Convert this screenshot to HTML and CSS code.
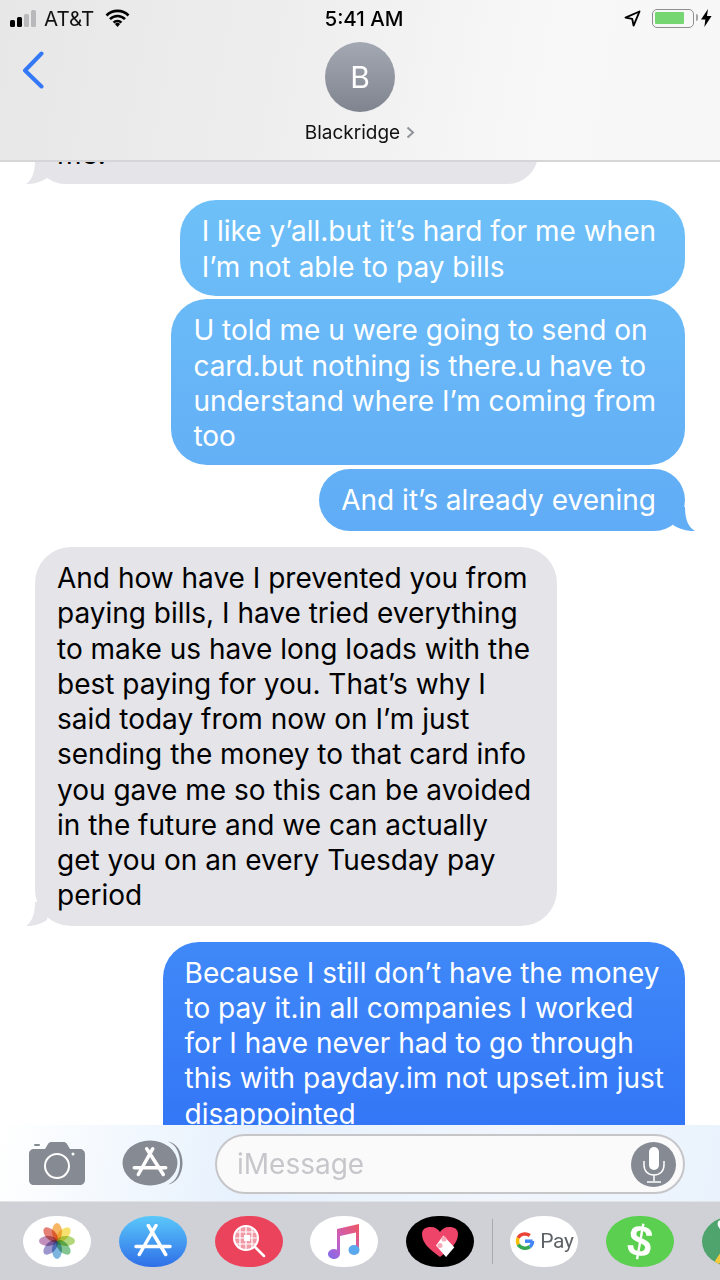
FILE: index.html
```html
<!DOCTYPE html>
<html lang="en">
<head>
    <meta charset="UTF-8">
    <title>Blackridge</title>
    <link rel="stylesheet" href="styles.css">
</head>
<body>
    <div class="phone">
        <header class="top">
            <div class="status">
                <div class="status-left">
                    <span class="bars"><i class="on"></i><i class="on"></i><i></i><i></i></span>
                    <span class="carrier">AT&amp;T</span>
                    <svg class="wifi" width="25" height="18" viewBox="0 0 25 18"><path d="M1.5 6.5a15.5 15.5 0 0 1 22 0M5 10.2a10.5 10.5 0 0 1 15 0M8.6 13.6a5.4 5.4 0 0 1 7.8 0" fill="none" stroke="#000" stroke-width="2.6"/><path d="M12.5 18l-2.6-3a3.6 3.6 0 0 1 5.2 0z" fill="#000"/></svg>
                </div>
                <div class="time">5:41 AM</div>
                <div class="status-right">
                    <svg class="arrow" width="17" height="17" viewBox="0 0 17 17"><path d="M15.5 1.5L1.5 7.6l6.7 1.3 1.4 6.7z" fill="none" stroke="#000" stroke-width="1.9" stroke-linejoin="round"/></svg>
                    <span class="battery"><span class="charge"></span></span>
                    <svg class="bolt" width="11" height="18" viewBox="0 0 11 18"><path d="M7 0L0 10.4h4.3L3.4 18l7.2-11H6z" fill="#000"/></svg>
                </div>
            </div>
            <div class="nav">
                <svg class="back" width="22" height="38" viewBox="0 0 22 38"><path d="M19.5 2.5L3 19.5l16.5 16" fill="none" stroke="#3478f6" stroke-width="4" stroke-linecap="round" stroke-linejoin="round"/></svg>
                <div class="contact">
                    <div class="avatar">B</div>
                    <div class="name">Blackridge<svg width="9" height="13" viewBox="0 0 9 13"><path d="M1.5 1.5L7 6.5l-5.500 5" fill="none" stroke="#8e929b" stroke-width="2"/></svg></div>
                </div>
            </div>
        </header>

        <main class="thread">
            <div class="bubble them first">me.<svg class="tail tail-left" width="24" height="24" viewBox="0 0 24 24"><path d="M9 0C9 12 6 20 0 24C8 24.500 15 22 21 18L24 0Z"/></svg></div>

            <div class="bubble me gap-big">I like y’all.but it’s hard for me when<br>I’m not able to pay bills</div>
            <div class="bubble me gap-small">U told me u were going to send on<br>card.but nothing is there.u have to<br>understand where I’m coming from<br>too</div>
            <div class="bubble me gap-small has-tail">And it’s already evening<svg class="tail tail-right" width="24" height="24" viewBox="0 0 24 24"><path d="M14 0C14 12 17 20 24 24C16 24.500 8 22 2 18L0 0Z"/></svg></div>

            <div class="bubble them gap-big">And how have I prevented you from<br>paying bills, I have tried everything<br>to make us have long loads with the<br>best paying for you. That’s why I<br>said today from now on I’m just<br>sending the money to that card info<br>you gave me so this can be avoided<br>in the future and we can actually<br>get you on an every Tuesday pay<br>period<svg class="tail tail-left" width="24" height="24" viewBox="0 0 24 24"><path d="M9 0C9 12 6 20 0 24C8 24.500 15 22 21 18L24 0Z"/></svg></div>

            <div class="bubble me gap-big last">Because I still don’t have the money<br>to pay it.in all companies I worked<br>for I have never had to go through<br>this with payday.im not upset.im just<br>disappointed</div>
        </main>

        <div class="composer">
            <svg class="camera" width="57" height="44" viewBox="0 0 57 44"><path d="M5 8h11l3-5c.6-1 1.500-2 3-2h13c1.500 0 2.400 1 3 2l3 5h10c2.500 0 5 2 5 5v26c0 3-2.500 5-5 5H5c-3 0-5-2-5-5V13c0-3 2-5 5-5z" fill="#868a93"/><rect x="5" y="3" width="6" height="2" rx="1" fill="#868a93"/><circle cx="28" cy="25" r="12" fill="none" stroke="#fff" stroke-width="2"/><circle cx="44" cy="13" r="1.500" fill="#fff"/></svg>
            <div class="apps-btn">
                <svg width="62" height="46" viewBox="0 0 62 46"><path d="M46 1.500c8 3 12 12 12 21.500s-4 18.500-12 21.500c8-1 14.500-10 14.500-21.500S54 2.500 46 1.500z" fill="#868a93"/><ellipse cx="28" cy="23" rx="27.500" ry="22.500" fill="#868a93"/><g class="store-a" stroke="#fff"><path d="M30.700 8.800L16.300 34.500M24.700 8.800L41.300 34.500M12.300 27.800H43.700"/></g></svg>
            </div>
            <div class="field">
                <span class="placeholder">iMessage</span>
                <span class="mic"><svg width="24" height="37" viewBox="0 0 24 37"><rect x="7" y="1" width="10" height="23" rx="5" fill="#fff"/><path d="M2 15v4c0 6 4 10 10 10s10-4 10-10v-4M12 29v6M5 36h14" fill="none" stroke="#fff" stroke-width="1.500"/></svg></span>
            </div>
        </div>

        <nav class="drawer">
            <div class="pill pill-white">
                <svg width="36" height="36" viewBox="0 0 36 36"><g class="petals"><ellipse cx="18" cy="9" rx="5" ry="9" fill="#f5a948"/><ellipse cx="18" cy="9" rx="5" ry="9" fill="#f5dc55" transform="rotate(45 18 18)"/><ellipse cx="18" cy="9" rx="5" ry="9" fill="#a5cf62" transform="rotate(90 18 18)"/><ellipse cx="18" cy="9" rx="5" ry="9" fill="#6dbb7e" transform="rotate(135 18 18)"/><ellipse cx="18" cy="9" rx="5" ry="9" fill="#66a8da" transform="rotate(180 18 18)"/><ellipse cx="18" cy="9" rx="5" ry="9" fill="#8b86c4" transform="rotate(225 18 18)"/><ellipse cx="18" cy="9" rx="5" ry="9" fill="#b67bb0" transform="rotate(270 18 18)"/><ellipse cx="18" cy="9" rx="5" ry="9" fill="#df6a5d" transform="rotate(315 18 18)"/></g></svg>
            </div>
            <div class="pill pill-store">
                <svg width="38" height="34" viewBox="0 0 38 34"><g class="store-a" stroke="#fff"><path d="M22 1.500L5.300 30.500M14.300 1.500L31.700 30.500M2 22.500H36"/></g></svg>
            </div>
            <div class="pill pill-red">
                <svg width="34" height="34" viewBox="0 0 34 34"><circle cx="14" cy="14" r="12" fill="#f19aa6" stroke="#fff" stroke-width="2"/><path d="M8 3v22M14 2v24M20 3v22M3 8h22M2 14h24M3 20h22" stroke="#fff" stroke-width="1.200"/><rect x="12" y="11" width="6" height="6" fill="#fff"/><path d="M23 23l9 9" stroke="#fff" stroke-width="2.500" stroke-linecap="round"/></svg>
            </div>
            <div class="pill pill-white">
                <svg width="34" height="36" viewBox="0 0 34 36"><defs><linearGradient id="note" x1="1" y1="0" x2="0" y2="1"><stop offset="0" stop-color="#f0565f"/><stop offset="0.55" stop-color="#c95fc0"/><stop offset="1" stop-color="#7d6bf0"/></linearGradient></defs><path d="M10 6L32 1v26a5 4.500 0 1 1-3-4.100V9.500L13 13v18a6 5 0 1 1-3-4.300z" fill="url(#note)"/><ellipse cx="27" cy="27" rx="5.500" ry="5" fill="#5aa9ee"/></svg>
            </div>
            <div class="pill pill-black">
                <svg width="38" height="34" viewBox="0 0 38 34"><path d="M19 33C8 25 1 19 1 10 1 4 6 3 10 3c4 0 7 2 9 5 2-3 5-5 9-5 4 0 9 1 9 7 0 9-7 15-18 23z" fill="#ee4469"/><path d="M15 21.500L22.300 11.500 33.300 23.200 25 33z" fill="#fff"/><circle cx="19" cy="21.500" r="2.500" fill="#f4a8b8"/><circle cx="23" cy="15" r="2.500" fill="#f4a8b8"/></svg>
            </div>
            <span class="divider"></span>
            <div class="pill pill-white gpay">
                <svg width="20" height="20" viewBox="0 0 20 20"><path d="M17.500 10.200H10" fill="none" stroke="#4285f4" stroke-width="3.500"/><path d="M17.500 10c0 2.500-1 4.500-2.700 5.800" fill="none" stroke="#4285f4" stroke-width="3.500"/><path d="M14.800 15.800C11 18.500 5 17 3.200 13.300" fill="none" stroke="#34a853" stroke-width="3.500"/><path d="M3.200 13.300c-.8-2-.8-4.600 0-6.600" fill="none" stroke="#fbbc05" stroke-width="3.500"/><path d="M3.200 6.700C5 3 10.700 1.500 14.800 4.500" fill="none" stroke="#ea4335" stroke-width="3.500"/></svg>
                <span class="pay">Pay</span>
            </div>
            <div class="pill pill-green"><span class="dollar">$</span></div>
            <div class="pill pill-maps">
                <svg width="68" height="51" viewBox="0 0 68 51"><path d="M12 51l8-12" stroke="#f3c93f" stroke-width="5"/><path d="M19 4c-3 0-4 3-3 6l3 5 3-5c1-3 0-6-3-6z" fill="#fff"/></svg>
            </div>
        </nav>
    </div>
</body>
</html>
```

FILE: styles.css
```css
html, body {
    margin: 0;
    padding: 0;
    background: #fff;
}

.phone {
    width: 720px;
    height: 1280px;
    display: flex;
    flex-direction: column;
    overflow: hidden;
    font-family: Inter, "Liberation Sans", sans-serif;
    color: #000;
}

/* top bar */

.top {
    height: 160px;
    flex: none;
    background: linear-gradient(100deg, #e7e7e8 0%, #eeeeee 40%, #f8f8f8 75%, #f7f7f7 100%);
    border-bottom: 2px solid #d6d6d8;
}

.status {
    height: 36px;
    display: grid;
    grid-template-columns: 1fr auto 1fr;
    align-items: center;
    padding: 0 8px 0 10px;
}

.status-left {
    display: flex;
    align-items: center;
}

.bars {
    display: flex;
    align-items: flex-end;
    gap: 2px;
    width: 28px;
    height: 17px;
}

.bars i {
    display: block;
    width: 5px;
    border-radius: 1.5px;
    background: #b9b9bb;
}

.bars i:nth-child(1) { height: 7px; }
.bars i:nth-child(2) { height: 10px; }
.bars i:nth-child(3) { height: 13px; }
.bars i:nth-child(4) { height: 17px; }
.bars i.on { background: #000; }

.carrier {
    margin-left: 6px;
    font-size: 20.5px;
    color: #111;
}

.wifi {
    margin-left: 11px;
}

.time {
    margin-left: 6px;
    font-size: 20.5px;
    font-weight: 500;
}

.status-right {
    display: flex;
    align-items: center;
    justify-content: flex-end;
}

.battery {
    position: relative;
    box-sizing: border-box;
    width: 42px;
    height: 19px;
    margin-left: 11px;
    padding: 2px;
    border: 1.5px solid #8f8f91;
    border-radius: 5px;
}

.battery:after {
    content: "";
    position: absolute;
    right: -5px;
    top: 4px;
    width: 2px;
    height: 7px;
    background: #a5a5a7;
    border-radius: 0 2px 2px 0;
}

.charge {
    display: block;
    width: 29px;
    height: 12px;
    background: #76d672;
    border-radius: 1px;
}

.bolt {
    margin-left: 7px;
}

.nav {
    display: grid;
    grid-template-columns: 1fr auto 1fr;
    padding: 6px 22px 0;
}

.back {
    margin-top: 9px;
}

.contact {
    display: flex;
    flex-direction: column;
    align-items: center;
}

.avatar {
    width: 70px;
    height: 70px;
    border-radius: 50%;
    background: linear-gradient(#a4a8b3, #80848f);
    color: #fff;
    font-size: 30px;
    line-height: 70px;
    text-align: center;
}

.name {
    margin-top: 9px;
    font-size: 19px;
    line-height: 24px;
    color: #111;
    white-space: nowrap;
}

.name svg {
    margin-left: 6px;
}

/* messages */

.thread {
    flex: 1;
    min-height: 0;
    overflow: hidden;
    display: flex;
    flex-direction: column;
    padding: 0 35px;
}

.bubble {
    position: relative;
    flex: none;
    box-sizing: border-box;
    font-size: 28px;
    line-height: 35.25px;
    padding: 14px 29px 11px 22px;
    border-radius: 36px;
    white-space: nowrap;
}

.them {
    align-self: flex-start;
    background: #e4e4e9;
    color: #000;
    padding: 14px 26px 12px 22px;
}

.me {
    align-self: flex-end;
    color: #fff;
    background: linear-gradient(#7ccbf9 0px, #6ec0f8 200px, #62aef6 500px, #3f88f8 950px, #3376f6 1130px) fixed;
}

.first {
    width: 503px;
    margin-top: -39px;
}

.gap-big { margin-top: 16px; }
.gap-small { margin-top: 3.5px; }

.has-tail {
    padding-top: 14px;
    padding-bottom: 13px;
}

.last {
    padding-right: 21px;
    padding-bottom: 40px;
}

.tail {
    position: absolute;
    bottom: 0;
}

.tail-left {
    left: -9px;
    fill: #e4e4e9;
}

.tail-right {
    right: -10px;
    fill: #62aef6;
}

/* input row */

.composer {
    flex: none;
    height: 77px;
    display: flex;
    align-items: center;
    padding: 0 35px 0 29px;
    background: linear-gradient(100deg, #fff 0%, #e6f1fd 35%, #f1f5fc 70%, #eaf3fd 100%);
    border-bottom: 1px solid #e2e3e6;
    box-sizing: border-box;
}

.apps-btn {
    height: 46px;
    margin-left: 36px;
}

.field {
    flex: 1;
    height: 60px;
    box-sizing: border-box;
    margin: 2px 0 0 31px;
    display: flex;
    align-items: center;
    justify-content: space-between;
    padding: 0 7px 0 20px;
    background: #fafafa;
    border: 2px solid #c6c6c9;
    border-radius: 30px;
}

.placeholder {
    font-size: 28px;
    color: #c7c7cb;
}

.mic {
    width: 45px;
    height: 45px;
    border-radius: 50%;
    background: #868a93;
    display: flex;
    align-items: center;
    justify-content: center;
}

.store-a {
    fill: none;
    stroke-width: 3.5;
    stroke-linecap: round;
}

/* app drawer */

.drawer {
    flex: none;
    height: 78px;
    display: flex;
    align-items: center;
    gap: 27.75px;
    padding: 0 0 0 23px;
    background: #cfd1d6;
    overflow: hidden;
}

.pill {
    flex: none;
    width: 68px;
    height: 51px;
    border-radius: 32px / 25.5px;
    display: flex;
    align-items: center;
    justify-content: center;
}

.pill-white { background: #fff; }
.pill-store { background: linear-gradient(#5ac8fa, #2f6fe8); }
.pill-red { background: #ec435c; }
.pill-black { background: #000; }

.petals ellipse {
    opacity: 0.85;
    mix-blend-mode: multiply;
}

.pill-green {
    background: #5bcf4f;
    color: #fff;
    font: bold 44px/1 "Liberation Sans", sans-serif;
}

.dollar {
    display: block;
    transform: rotate(10deg);
}

.pill-maps {
    background: #4fa36c;
    overflow: hidden;
}

.divider {
    flex: none;
    width: 1px;
    height: 45px;
    margin: 0 -10.5px 0 -9.75px;
    background: #a8aaaf;
}

.gpay {
    gap: 5px;
    justify-content: flex-start;
    padding-left: 5px;
    box-sizing: border-box;
}

.pay {
    font: 400 21px Roboto, sans-serif;
    color: #5f6368;
    letter-spacing: -0.3px;
}
```
